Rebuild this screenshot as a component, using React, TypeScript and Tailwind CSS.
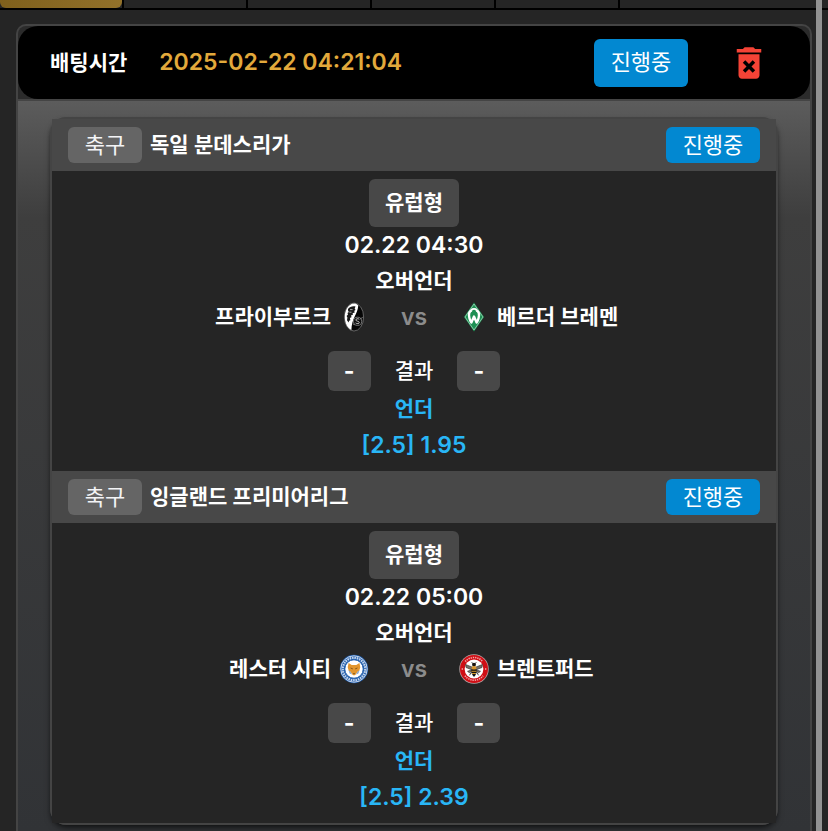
import type { ReactNode } from 'react'
import { MdDeleteForever } from 'react-icons/md'

type Team = {
  name: string
  logo: ReactNode
}

type Match = {
  id: number
  sport: string
  league: string
  status: string
  type: string
  time: string
  market: string
  home: Team
  away: Team
  pick: string
  odds: string
}

const TABS = [1, 2, 3, 4, 5, 6]

function FreiburgLogo() {
  return (
    <svg viewBox="0 0 30 30" className="size-[30px] shrink-0" aria-hidden="true">
      <ellipse cx="15" cy="15" rx="9.6" ry="14" fill="#050505" stroke="#858585" strokeWidth=".7" />
      <path d="M15 1.6C9.500 1.800 5.800 8 5.800 15c0 6 2.500 11.200 6.600 13 .2-5.500 1.300-9.500 3.300-13.500 1.600-3.200 3.200-6.500 3.600-11C18 2.200 16.700 1.600 15 1.600Z" fill="#fff" />
      <path d="M9 7c1.800-2.200 4.600-3.100 7.500-2.400l-.8 2 .9 1.400-1.300.8.300 1.900-1.900.4.100 1.800-1.700.4.400 2-1.600.8.500 2.200-1.300.4-.4 1.800-1.700-2.300.4-2.600-.8-1.500 1.400-1.500-.5-1.700 1.300-.9-.8-1.500Z" fill="#1b1b1b" />
      <path d="M11 7.600h2.600M10.300 10.200h2.200" stroke="#fff" strokeWidth=".6" />
      <circle cx="18.600" cy="19.300" r="4.100" fill="#0c0c0c" stroke="#8d8d8d" strokeWidth=".8" />
      <path d="M20.300 17.300c-1.200-1-3.500-.6-3.500.7 0 1.500 3.500 1 3.500 2.500 0 1.300-2.500 1.500-3.700.4" fill="none" stroke="#d0d0d0" strokeWidth=".9" />
      <path d="m13.800 22 2 .8m5.200-5.600 2.800-2" stroke="#999" strokeWidth=".7" />
    </svg>
  )
}

function BremenLogo() {
  return (
    <svg viewBox="0 0 30 30" className="size-[30px] shrink-0" aria-hidden="true">
      <path d="M15 .4 25 15 15 29.600 5 15Z" fill="#1d9053" />
      <path d="M15 2 24 15 15 28 6 15Z" fill="none" stroke="#cfe9db" strokeWidth=".6" />
      <path d="M12.800 8.300C9.800 9.300 9.700 13 10.400 16c.4 1.800 1.100 3.400 2 4.600L15 14.600l2.600 6c.9-1.200 1.600-2.800 2-4.600.7-3 .6-6.700-2.400-7.700" fill="none" stroke="#fff" strokeWidth="2.400" strokeLinejoin="round" />
      <path d="M12.200 8.200c1.500-1.500 4.100-1.500 5.600 0" fill="none" stroke="#fff" strokeWidth="2" />
    </svg>
  )
}

function LeicesterLogo() {
  return (
    <svg viewBox="0 0 30 30" className="size-[30px] shrink-0" aria-hidden="true">
      <circle cx="15" cy="15" r="14.200" fill="#1f5cab" />
      <circle cx="15" cy="15" r="13.200" fill="none" stroke="#f0f4fa" strokeWidth=".8" />
      <circle cx="15" cy="15" r="11.200" fill="none" stroke="#c3d4eb" strokeWidth="2.200" strokeDasharray="1.600 .8" />
      <circle cx="15" cy="15" r="9.200" fill="#fff" stroke="#1f5cab" strokeWidth=".9" />
      <path d="M9.600 9 12.700 11h4.600l3.100-2 .9 4.200-1 3.200-2 1.500-1.500 2.500L15 21.500l-1.800-1.100-1.500-2.500-2-1.500-1-3.200Z" fill="#e3962e" />
      <path d="m9.400 16 2.300 2 1.200 2.500-2.300-1ZM20.600 16l-2.300 2-1.200 2.500 2.300-1Z" fill="#8ba8cf" />
      <path d="m11.600 14 2.200.9m4.600-.9-2.200.9" stroke="#6f4514" strokeWidth=".8" />
      <path d="M14.200 19.300h1.600l-.8 1.300Z" fill="#222" />
    </svg>
  )
}

function BrentfordLogo() {
  return (
    <svg viewBox="0 0 30 30" className="size-[30px] shrink-0" aria-hidden="true">
      <circle cx="15" cy="15" r="14.700" fill="#b9a7a7" />
      <circle cx="15" cy="15" r="14" fill="#cf0e15" />
      <path d="M6.200 7.600a11.500 11.500 0 0 1 17.600 0" fill="none" stroke="#f0a9a9" strokeWidth="1.600" strokeDasharray="1.300 .9" />
      <path d="M6 21.800a11.400 11.400 0 0 0 18 0" fill="none" stroke="#f0a9a9" strokeWidth="1.600" strokeDasharray="1.300 .9" />
      <circle cx="3.300" cy="15" r=".8" fill="#f6c9c9" />
      <circle cx="26.700" cy="15" r=".8" fill="#f6c9c9" />
      <circle cx="15" cy="15" r="9.400" fill="#fff" />
      <path d="M13.500 13.200 6.600 10.500l.4 3 5.800 2.300-4.300 1.500 1.800 1.400 3.200-2ZM16.500 13.200l6.900-2.700-.4 3-5.800 2.300 4.300 1.500-1.800 1.400-3.200-2Z" fill="#77706a" stroke="#2c2724" strokeWidth=".6" />
      <path d="m12.700 8.200 1.300 1.600m3.300-1.600L16 9.800M12.500 18l-2 3.300m7-3.300 2 3.300" stroke="#111" strokeWidth=".8" />
      <circle cx="15" cy="10.700" r="1.900" fill="#171310" />
      <ellipse cx="15" cy="14" rx="2.500" ry="2" fill="#d7952c" />
      <path d="M12.400 15.500h5.200c.5 3-.8 6-2.600 7.500-1.800-1.500-3.100-4.500-2.600-7.500Z" fill="#171310" />
      <path d="M12.600 17.300h4.800m-4.400 2.200h4" stroke="#e6a92f" strokeWidth=".9" />
    </svg>
  )
}

const MATCHES: Match[] = [
  {
    id: 1,
    sport: '축구',
    league: '독일 분데스리가',
    status: '진행중',
    type: '유럽형',
    time: '02.22 04:30',
    market: '오버언더',
    home: { name: '프라이부르크', logo: <FreiburgLogo /> },
    away: { name: '베르더 브레멘', logo: <BremenLogo /> },
    pick: '언더',
    odds: '[2.5] 1.95',
  },
  {
    id: 2,
    sport: '축구',
    league: '잉글랜드 프리미어리그',
    status: '진행중',
    type: '유럽형',
    time: '02.22 05:00',
    market: '오버언더',
    home: { name: '레스터 시티', logo: <LeicesterLogo /> },
    away: { name: '브렌트퍼드', logo: <BrentfordLogo /> },
    pick: '언더',
    odds: '[2.5] 2.39',
  },
]

function Score({ value }: { value: string }) {
  return (
    <span className="flex h-10 w-[43px] items-center justify-center rounded-md bg-[#484848] text-[23px] font-bold">
      {value}
    </span>
  )
}

function MatchItem({ match }: { match: Match }) {
  return (
    <li>
      <div className="flex h-[52px] items-center gap-2 bg-[#484848] px-4">
        <span className="flex h-9 w-[74px] items-center justify-center rounded-md bg-[#656565] text-[22px] font-normal text-gray-100">
          {match.sport}
        </span>
        <h2 className="flex-1">{match.league}</h2>
        <span className="flex h-9 w-[94px] items-center justify-center rounded-md bg-[#0288d1] text-[22px] font-normal">
          {match.status}
        </span>
      </div>

      <div className="flex flex-col items-center bg-[#252525] py-2 leading-9">
        <span className="flex h-12 items-center rounded-md bg-[#484848] px-4">{match.type}</span>
        <time className="text-[23px] leading-9">{match.time}</time>
        <p>{match.market}</p>

        <div className="grid w-full grid-cols-[1fr_90px_1fr] items-center">
          <div className="flex items-center justify-end gap-2">
            <span>{match.home.name}</span>
            {match.home.logo}
          </div>
          <span className="text-center text-[23px] leading-9 text-[#8c8c8c]">vs</span>
          <div className="flex items-center gap-2">
            {match.away.logo}
            <span>{match.away.name}</span>
          </div>
        </div>

        <div className="mt-4 flex items-center gap-6">
          <Score value="-" />
          <span className="font-medium">결과</span>
          <Score value="-" />
        </div>

        <p className="text-[#29b6f6]">{match.pick}</p>
        <p className="text-[23px] leading-9 text-[#29b6f6]">{match.odds}</p>
      </div>
    </li>
  )
}

export default function App() {
  return (
    <div className="relative min-h-screen bg-[#252525] font-['Inter','Noto_Sans_CJK_KR',sans-serif] text-[21px] font-semibold text-white">
      {/* 상단 탭 하단부 */}
      <nav className="flex h-2.5 border-b-2 border-black">
        {TABS.map((tab) => (
          <div key={tab} className="w-[15%] max-w-[124px] border-r-2 border-black last:max-w-none last:flex-1 last:border-r-0">
            {tab === 1 && <div className="h-full rounded-b-md bg-linear-to-r from-[#7f601c] to-[#92712a]" />}
          </div>
        ))}
      </nav>

      <main className="px-4 pt-3.5">
        <section className="rounded-t-[10px] border-2 border-b-0 border-[#444444] bg-[#2b2b2b]">
          <header className="flex h-[73px] items-center rounded-[20px] bg-black pr-10 pl-8">
            <span>배팅시간</span>
            <time className="ml-8 flex-1 text-[23px] text-[#e2a93b]">2025-02-22 04:21:04</time>
            <button type="button" className="h-12 w-[94px] rounded-md bg-[#0288d1] text-[22px] font-normal">
              진행중
            </button>
            <button type="button" aria-label="삭제" className="ml-10 text-[#f44336]">
              <MdDeleteForever size={42} />
            </button>
          </header>

          <div className="border-t-2 border-[#444444] bg-linear-to-b from-[#5c5c5c] via-[#3e3e3e] via-16% to-[#313336] px-8 pt-4 pb-1.5">
            <ul className="rounded-2xl border-2 border-[#444444] shadow-md shadow-black/50">
              {MATCHES.map((match) => (
                <MatchItem key={match.id} match={match} />
              ))}
            </ul>
          </div>
        </section>
      </main>

      {/* 스크롤바 */}
      <div className="absolute inset-y-0 right-1.5 w-1.5 bg-[#929292]" />
    </div>
  )
}
